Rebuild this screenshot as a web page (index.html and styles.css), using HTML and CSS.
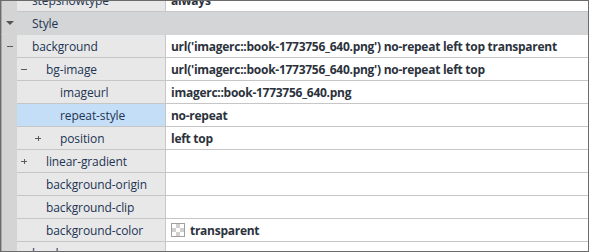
FILE: index.html
```html
<!DOCTYPE html>
<html lang="en">
  <head>
    <meta charset="UTF-8" />
    <title>Property Grid</title>
    <link rel="stylesheet" href="styles.css">
  </head>
  <body>
    <div class="grid">
      <div class="rows">
        <div class="row">
          <div class="gutter"></div>
          <div class="name lvl1"><span class="toggle"></span>stepshowtype</div>
          <div class="value">always</div>
        </div>

        <div class="row group">
          <div class="gutter"><span class="caret"></span></div>
          <div class="name lvl1"><span class="toggle"></span>Style</div>
          <div class="value"></div>
        </div>

        <div class="row">
          <div class="gutter"><span class="toggle minus"></span></div>
          <div class="name lvl1"><span class="toggle"></span>background</div>
          <div class="value">url('imagerc::book-1773756_640.png') no-repeat left top transparent</div>
        </div>

        <div class="row">
          <div class="gutter"></div>
          <div class="name lvl2"><span class="toggle minus"></span>bg-image</div>
          <div class="value">url('imagerc::book-1773756_640.png') no-repeat left top</div>
        </div>

        <div class="row">
          <div class="gutter"></div>
          <div class="name lvl3"><span class="toggle"></span>imageurl</div>
          <div class="value">imagerc::book-1773756_640.png</div>
        </div>

        <div class="row selected">
          <div class="gutter"></div>
          <div class="name lvl3"><span class="toggle"></span>repeat-style</div>
          <div class="value">no-repeat</div>
        </div>

        <div class="row">
          <div class="gutter"></div>
          <div class="name lvl3"><span class="toggle plus"></span>position</div>
          <div class="value">left top</div>
        </div>

        <div class="row">
          <div class="gutter"></div>
          <div class="name lvl2"><span class="toggle plus"></span>linear-gradient</div>
          <div class="value"></div>
        </div>

        <div class="row">
          <div class="gutter"></div>
          <div class="name lvl2"><span class="toggle"></span>background-origin</div>
          <div class="value"></div>
        </div>

        <div class="row">
          <div class="gutter"></div>
          <div class="name lvl2"><span class="toggle"></span>background-clip</div>
          <div class="value"></div>
        </div>

        <div class="row">
          <div class="gutter"></div>
          <div class="name lvl2"><span class="toggle"></span>background-color</div>
          <div class="value"><span class="swatch"></span>transparent</div>
        </div>

        <div class="row">
          <div class="gutter"></div>
          <div class="name lvl1"><span class="toggle"></span>border</div>
          <div class="value"></div>
        </div>
      </div>
    </div>
  </body>
</html>
```

FILE: styles.css
```css
* {
  box-sizing: border-box;
}

body {
  margin: 0;
  font-family: "Open Sans", "Noto Sans", sans-serif;
  font-size: 12px;
}

.grid {
  width: 589px;
  height: 252px;
  border: 1px solid #6b6b6b;
  overflow: hidden;
  background: #fff;
}

.rows {
  margin-top: -12px;
}

.row {
  display: grid;
  grid-template-columns: 16px 149px 1fr;
  height: 23px;
}

.gutter {
  background: #d4d4d4;
  border-left: 1px solid #a8a8a8;
  display: flex;
  align-items: center;
  justify-content: center;
}

.name {
  display: flex;
  align-items: center;
  background: #e8e8e9;
  color: #223452;
  border-right: 1px solid #c6c6c6;
  border-bottom: 1px solid #c6c6c6;
  white-space: nowrap;
  letter-spacing: -0.1px;
}

.lvl1 {
  padding-left: 15px;
}

.lvl1 .toggle {
  width: 0;
  margin-right: 0;
}

.lvl3 {
  padding-left: 14px;
}

.value {
  display: flex;
  align-items: center;
  padding-left: 5px;
  color: #2b323c;
  font-weight: bold;
  letter-spacing: -0.27px;
  border-bottom: 1px solid #c6c6c6;
  white-space: nowrap;
}

.toggle {
  flex: none;
  width: 14px;
  height: 9px;
  margin-right: 15px;
  position: relative;
}

.gutter .toggle {
  margin: 0;
  width: 6px;
}

.toggle.minus::before,
.toggle.plus::before,
.toggle.plus::after {
  content: "";
  position: absolute;
  background: #5a5a5a;
}

.toggle.minus::before,
.toggle.plus::before {
  left: 50%;
  top: 4px;
  width: 6px;
  height: 1px;
  margin-left: -3px;
}

.toggle.plus::after {
  left: 50%;
  top: 2px;
  width: 1px;
  height: 5px;
}

.caret {
  width: 0;
  height: 0;
  border-left: 4px solid transparent;
  border-right: 4px solid transparent;
  border-top: 4px solid #555;
}

.group .name,
.group .value {
  background: #d4d5d6;
  border-right: none;
  border-bottom: 1px solid #d4d5d6;
}

.group .gutter {
  border-bottom: 1px solid #d4d5d6;
}

.selected .name {
  background: #c5def7;
}

.swatch {
  width: 14px;
  height: 14px;
  margin-right: 5px;
  border: 1px solid #a0a0a0;
  background-color: #fff;
  background-image:
    linear-gradient(45deg, #d0d0d0 25%, transparent 25%, transparent 75%, #d0d0d0 75%),
    linear-gradient(45deg, #d0d0d0 25%, transparent 25%, transparent 75%, #d0d0d0 75%);
  background-size: 8px 8px;
  background-position: 0 0, 4px 4px;
}
```
